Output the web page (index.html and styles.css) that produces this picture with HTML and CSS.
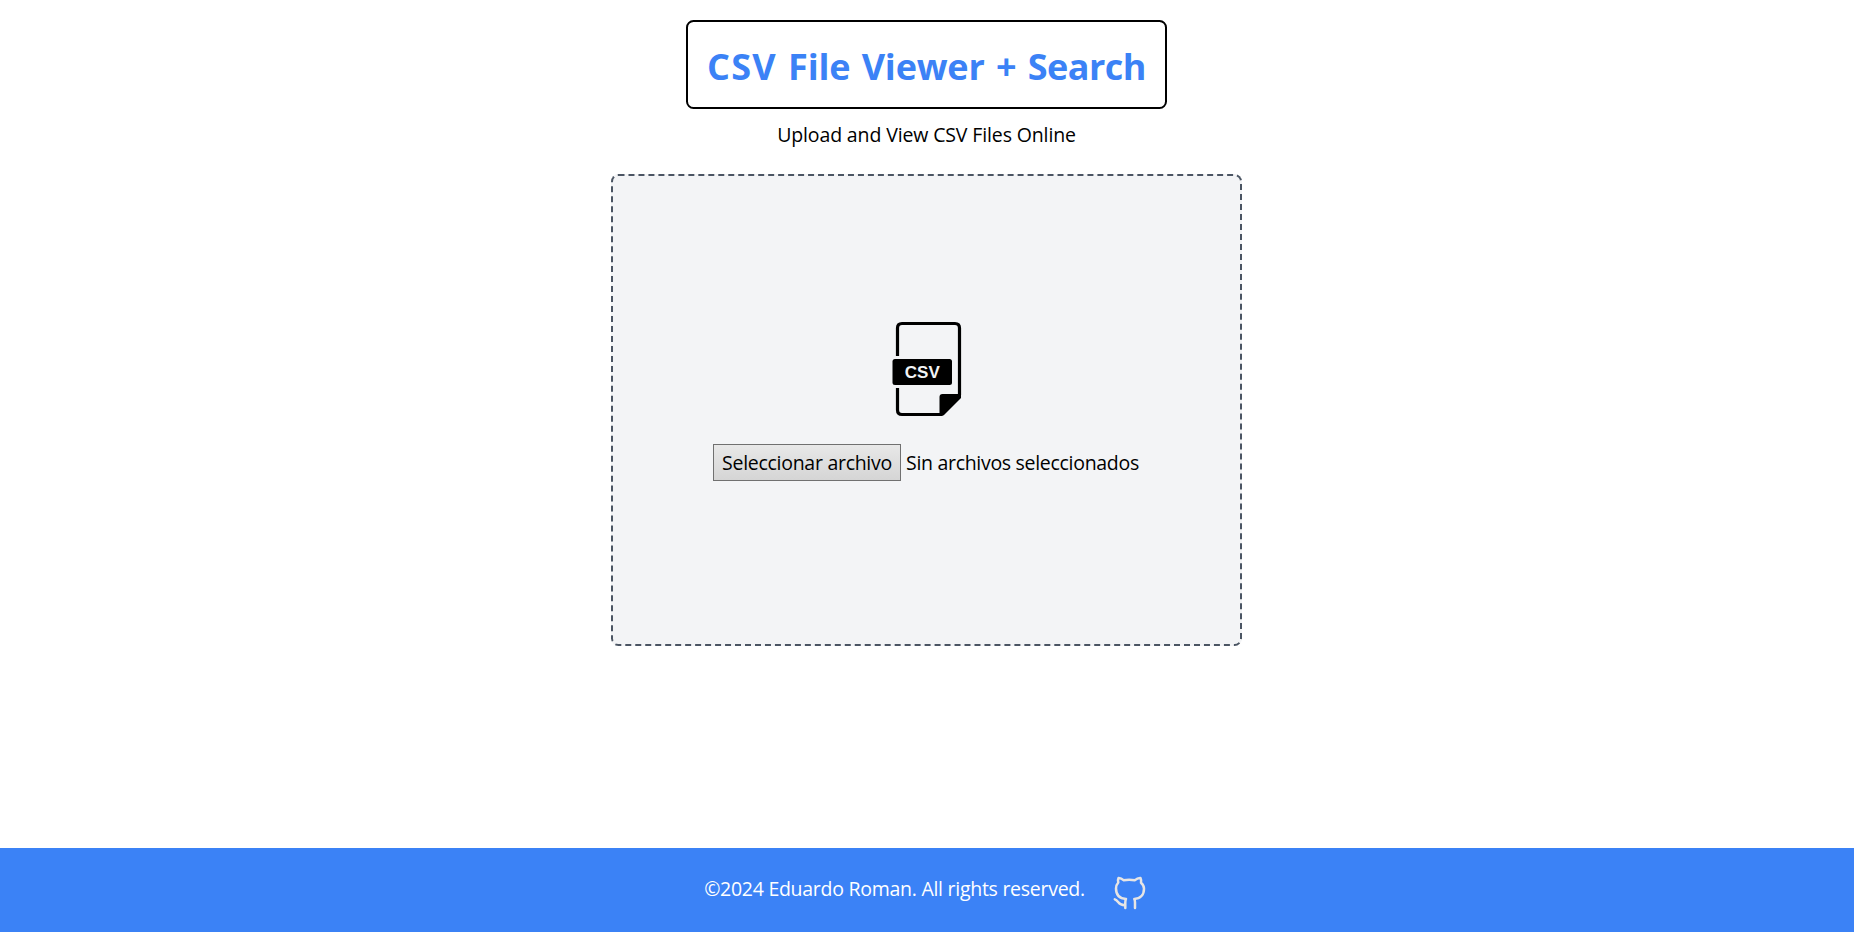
FILE: index.html
```
<!DOCTYPE html>
<html lang="en">
<head>
<meta charset="utf-8">
<title>CSV File Viewer + Search</title>
<link rel="stylesheet" href="styles.css">
</head>
<body>
<main class="page">
  <h1 class="title"><span class="wide">CSV</span> File Viewer + <span class="tight">Search</span></h1>
  <p class="subtitle">Upload and View CSV Files Online</p>
  <section class="dropzone">
    <svg class="file-icon" width="120" height="130" viewBox="0 0 120 130" role="img" aria-label="CSV">
      <path d="M27.500 56V28q0-4.500 4.500-4.500H85q4.500 0 4.500 4.500V95M27.500 88v22q0 4.500 4.500 4.500H72" fill="none" stroke="#000" stroke-width="3.200"/>
      <path d="M91 94v4L74 115q-1 1-3 1h-1.500V97q0-3 3-3z"/>
      <rect x="22.500" y="59" width="59.500" height="26" rx="2.500"/>
      <text class="icon-label" x="52.300" y="78" text-anchor="middle">CSV</text>
    </svg>
    <div class="picker">
      <button class="pick" type="button">Seleccionar archivo</button>
      <span class="status">Sin archivos seleccionados</span>
    </div>
  </section>
</main>
<footer class="footer">
  <span class="copyright">©2024 Eduardo Roman. All rights reserved.</span>
  <svg class="github" width="38" height="38" viewBox="0 0 38 38" fill="none" stroke="#e7e5e4" stroke-width="2.500" stroke-linecap="round" stroke-linejoin="round">
    <path d="M15.300 35V29.500q0-2 .7-3.500C9.500 25.500 6 21.500 6 15.500q0-3.500 2.300-6-.8-2.500.2-4.500 2.500-.2 5 2.200 5.500-1 11.500 0 2.500-2.400 5.500-2.200 1 2 .5 4.700 3 2.500 3 6c0 6-3.500 10-9.700 10.300q.7 1.500.7 3.500V35M15.300 32.300c-7 .5-6.500-4.500-10.500-6"/>
  </svg>
</footer>
</body>
</html>
```
FILE: styles.css
```
body { margin: 0; min-height: 932px; display: flex; flex-direction: column; background: #fff; color: #000; font: 19.5px/30px "Open Sans", sans-serif; }
.page { flex: 1; display: flex; flex-direction: column; align-items: center; padding: 20px 1px 0 0; }
.title { box-sizing: border-box; width: 481px; height: 89px; margin: 0; padding: 22px 0 0; border: 2px solid #000; border-radius: 7.5px; color: #3b82f6; font-size: 36px; line-height: 45px; font-weight: 700; letter-spacing: -0.2px; word-spacing: 2.2px; text-align: center; white-space: nowrap; }
.wide { letter-spacing: 1.2px; }
.tight { letter-spacing: -0.5px; }
.subtitle { margin: 11px 0 24px; letter-spacing: -0.13px; }
.dropzone { box-sizing: border-box; width: 631px; height: 472px; border: 2px dashed #4b5563; border-radius: 7.5px; background: #f3f4f6; display: flex; flex-direction: column; align-items: center; padding-top: 124px; }
.file-icon { margin-left: 7px; }
.icon-label { font: bold 17px "Liberation Sans", sans-serif; fill: #f3f4f6; }
.picker { display: flex; align-items: center; gap: 5px; width: 427px; margin-top: 14px; }
.pick { box-sizing: border-box; flex: none; width: 188px; height: 37px; padding: 0; border: 1px solid #707070; background: linear-gradient(#e8e8e8, #d5d5d5); color: #000; font: inherit; letter-spacing: -0.28px; white-space: nowrap; }
.status { letter-spacing: -0.3px; white-space: nowrap; }
.footer { box-sizing: border-box; height: 84px; padding-right: 2px; background: #3b82f6; color: #fff; display: flex; justify-content: center; align-items: center; gap: 25px; }
.copyright { letter-spacing: -0.27px; margin-top: -2px; }
.github { margin-top: 4px; }
```
